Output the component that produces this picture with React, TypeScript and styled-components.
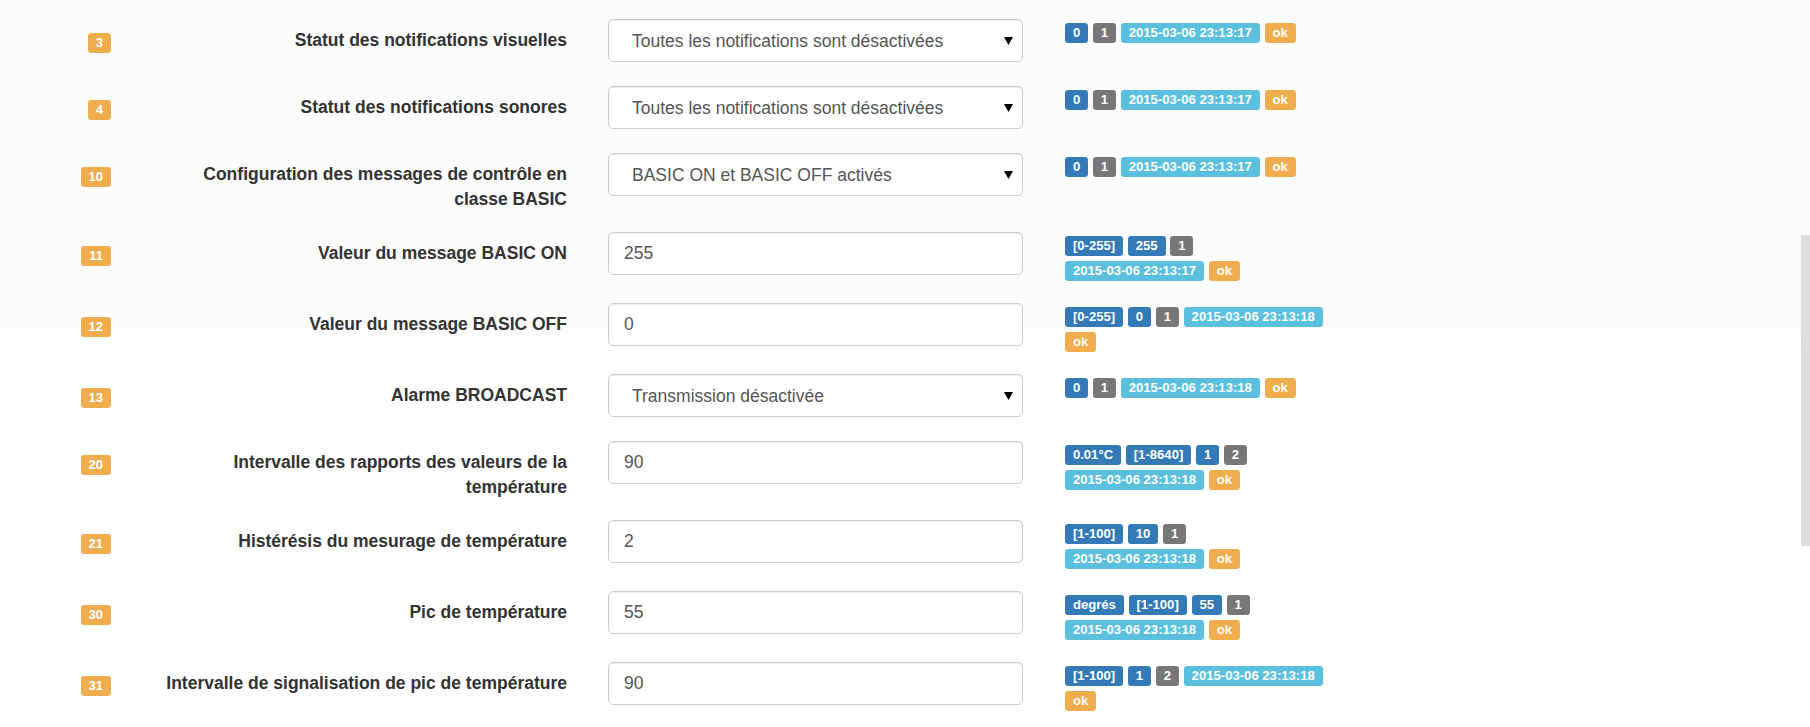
import React from "react";
import styled, { createGlobalStyle } from "styled-components";

const GlobalStyle = createGlobalStyle`
  * { box-sizing: border-box; }
  html, body { margin: 0; padding: 0; }
  body {
    width: 1810px;
    height: 727px;
    overflow: hidden;
    font-family: "Liberation Sans", Arial, Helvetica, sans-serif;
    font-size: 17.5px;
    line-height: 25px;
    color: #333;
    background: linear-gradient(to bottom, #fcfcfc 0, #fcfcfc 325px, #ffffff 352px, #ffffff 100%);
  }
`;

type Variant = "primary" | "default" | "info" | "warning";

const colors: Record<Variant, string> = {
  primary: "#337ab7",
  default: "#777777",
  info: "#5bc0de",
  warning: "#f0ad4e",
};

const Tag = styled.span<{ $v: Variant }>`
  display: inline-block;
  padding: 0.2em 0.6em 0.3em;
  font-size: 13.125px;
  font-weight: bold;
  line-height: 1;
  color: #fff;
  text-align: center;
  white-space: nowrap;
  vertical-align: baseline;
  border-radius: 0.25em;
  background-color: ${(p) => colors[p.$v]};
`;

const Form = styled.div`
  padding-top: 19px;
`;

const Row = styled.div`
  display: grid;
  grid-template-columns: 148px 460px 457px 262px;
  align-items: start;
  min-height: 48px;
  margin-bottom: 19px;
`;

const BadgeCell = styled.div`
  display: flex;
  justify-content: flex-end;
  padding-top: 14px;
  padding-right: 37px;
`;

const LabelCell = styled.div`
  padding-top: 9px;
  padding-bottom: 1px;
  padding-right: 41px;
  text-align: right;
  font-weight: bold;
  line-height: 25px;
  color: #333;
`;

const ControlCell = styled.div`
  padding-right: 42px;
`;

const SelectWrap = styled.div`
  position: relative;
  height: 43px;
`;

const baseControl = `
  display: block;
  width: 100%;
  height: 43px;
  margin: 0;
  font-family: "Liberation Sans", Arial, Helvetica, sans-serif;
  font-size: 17.5px;
  color: #555;
  background-color: #fff;
  border: 1px solid #ccc;
  border-radius: 5px;
  box-shadow: inset 0 1px 1px rgba(0, 0, 0, 0.075);
  outline: none;
`;

const Select = styled.select`
  ${baseControl}
  appearance: none;
  -webkit-appearance: none;
  padding: 0 30px 0 23px;
`;

const Arrow = styled.svg`
  position: absolute;
  right: 10px;
  top: 50%;
  transform: translateY(-50%);
  pointer-events: none;
`;

const Input = styled.input`
  ${baseControl}
  padding: 0 15px;
`;

const StatusCell = styled.div`
  font-size: 17.5px;
  line-height: 25px;
  padding-bottom: 2px;
`;

const ScrollThumb = styled.div`
  position: fixed;
  right: 0;
  top: 235px;
  width: 9px;
  height: 311px;
  background: #dedede;
`;

type S = [Variant, string];
type RowData = {
  id: string;
  label: string;
  kind: "select" | "input";
  value: string;
  status: S[];
};

const P: Variant = "primary";
const D: Variant = "default";
const I: Variant = "info";
const W: Variant = "warning";

const rows: RowData[] = [
  {
    id: "3",
    label: "Statut des notifications visuelles",
    kind: "select",
    value: "Toutes les notifications sont désactivées",
    status: [[P, "0"], [D, "1"], [I, "2015-03-06 23:13:17"], [W, "ok"]],
  },
  {
    id: "4",
    label: "Statut des notifications sonores",
    kind: "select",
    value: "Toutes les notifications sont désactivées",
    status: [[P, "0"], [D, "1"], [I, "2015-03-06 23:13:17"], [W, "ok"]],
  },
  {
    id: "10",
    label: "Configuration des messages de contrôle en classe BASIC",
    kind: "select",
    value: "BASIC ON et BASIC OFF activés",
    status: [[P, "0"], [D, "1"], [I, "2015-03-06 23:13:17"], [W, "ok"]],
  },
  {
    id: "11",
    label: "Valeur du message BASIC ON",
    kind: "input",
    value: "255",
    status: [[P, "[0-255]"], [P, "255"], [D, "1"], [I, "2015-03-06 23:13:17"], [W, "ok"]],
  },
  {
    id: "12",
    label: "Valeur du message BASIC OFF",
    kind: "input",
    value: "0",
    status: [[P, "[0-255]"], [P, "0"], [D, "1"], [I, "2015-03-06 23:13:18"], [W, "ok"]],
  },
  {
    id: "13",
    label: "Alarme BROADCAST",
    kind: "select",
    value: "Transmission désactivée",
    status: [[P, "0"], [D, "1"], [I, "2015-03-06 23:13:18"], [W, "ok"]],
  },
  {
    id: "20",
    label: "Intervalle des rapports des valeurs de la température",
    kind: "input",
    value: "90",
    status: [[P, "0.01°C"], [P, "[1-8640]"], [P, "1"], [D, "2"], [I, "2015-03-06 23:13:18"], [W, "ok"]],
  },
  {
    id: "21",
    label: "Histérésis du mesurage de température",
    kind: "input",
    value: "2",
    status: [[P, "[1-100]"], [P, "10"], [D, "1"], [I, "2015-03-06 23:13:18"], [W, "ok"]],
  },
  {
    id: "30",
    label: "Pic de température",
    kind: "input",
    value: "55",
    status: [[P, "degrés"], [P, "[1-100]"], [P, "55"], [D, "1"], [I, "2015-03-06 23:13:18"], [W, "ok"]],
  },
  {
    id: "31",
    label: "Intervalle de signalisation de pic de température",
    kind: "input",
    value: "90",
    status: [[P, "[1-100]"], [P, "1"], [D, "2"], [I, "2015-03-06 23:13:18"], [W, "ok"]],
  },
];

function Control({ row }: { row: RowData }) {
  if (row.kind === "select") {
    return (
      <SelectWrap>
        <Select value={row.value} onChange={() => undefined}>
          <option value={row.value}>{row.value}</option>
        </Select>
        <Arrow width="9" height="8" viewBox="0 0 9 8">
          <polygon points="0,0 9,0 4.5,8" fill="#000" />
        </Arrow>
      </SelectWrap>
    );
  }
  return <Input value={row.value} readOnly />;
}

export default function App() {
  return (
    <>
      <GlobalStyle />
      <Form>
        {rows.map((row) => (
          <Row key={row.id}>
            <BadgeCell>
              <Tag $v="warning">{row.id}</Tag>
            </BadgeCell>
            <LabelCell>{row.label}</LabelCell>
            <ControlCell>
              <Control row={row} />
            </ControlCell>
            <StatusCell>
              {row.status.map(([v, t], i) => (
                <React.Fragment key={i}>
                  {i > 0 ? " " : null}
                  <Tag $v={v}>{t}</Tag>
                </React.Fragment>
              ))}
            </StatusCell>
          </Row>
        ))}
      </Form>
      <ScrollThumb />
    </>
  );
}
